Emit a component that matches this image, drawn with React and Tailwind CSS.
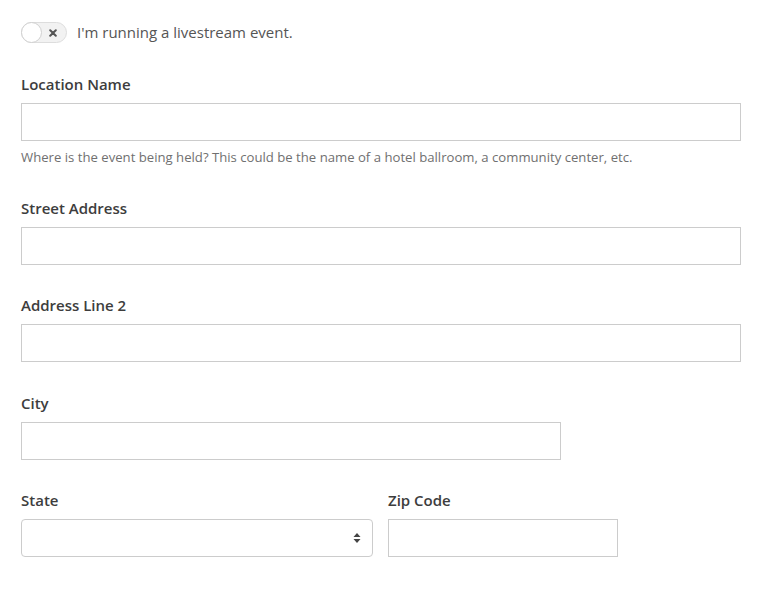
export default function App() {
  const font = { fontFamily: '"Open Sans", "Noto Sans", sans-serif' };
  const label = "block h-[21px] leading-[21px] text-[15px] font-semibold text-[#3d3d3d]";
  const input = "block h-[38px] border border-[#ccc] bg-white";
  return (
    <div className="min-h-[607px] w-[777px] bg-white pl-[21px] pt-[22px]" style={font}>
      <div className="flex h-[21px] items-center">
        <div className="relative flex h-[21px] w-[46px] items-center rounded-full border border-[#ddd] bg-[#f2f2f2]">
          <div className="absolute left-[-1px] top-[-1px] h-[21px] w-[21px] rounded-full border border-[#d0d0d0] bg-white" />
          <svg className="absolute left-[27px] top-[6px]" width="8" height="8" viewBox="0 0 8 8">
            <path d="M1.2 1.2 L6.8 6.8 M6.8 1.2 L1.2 6.8" stroke="#555" strokeWidth="2" strokeLinecap="round" />
          </svg>
        </div>
        <span className="ml-[10px] text-[15px] leading-[21px] text-[#555]">I'm running a livestream event.</span>
      </div>

      <label className={`${label} mt-[31px]`}>Location Name</label>
      <div className={`${input} mt-[8px] w-[720px]`} />
      <p className="mt-[7px] text-[13.15px] leading-[18px] text-[#707070]">
        Where is the event being held? This could be the name of a hotel ballroom, a community center, etc.
      </p>

      <label className={`${label} mt-[32px]`}>Street Address</label>
      <div className={`${input} mt-[8px] w-[720px]`} />

      <label className={`${label} mt-[30px]`}>Address Line 2</label>
      <div className={`${input} mt-[8px] w-[720px]`} />

      <label className={`${label} mt-[31px]`}>City</label>
      <div className={`${input} mt-[8px] w-[540px]`} />

      <div className="mt-[30px] flex gap-[15px]">
        <div>
          <label className={label}>State</label>
          <div className="mt-[8px] flex h-[38px] w-[352px] items-center justify-end rounded-[4px] border border-[#ccc] bg-white pr-[11px]">
            <svg width="8" height="12" viewBox="0 0 8 12">
              <path d="M4 1 L7.5 5 L0.5 5 Z M4 11 L7.5 7 L0.5 7 Z" fill="#444" />
            </svg>
          </div>
        </div>
        <div>
          <label className={label}>Zip Code</label>
          <div className={`${input} mt-[8px] w-[230px]`} />
        </div>
      </div>
    </div>
  );
}
